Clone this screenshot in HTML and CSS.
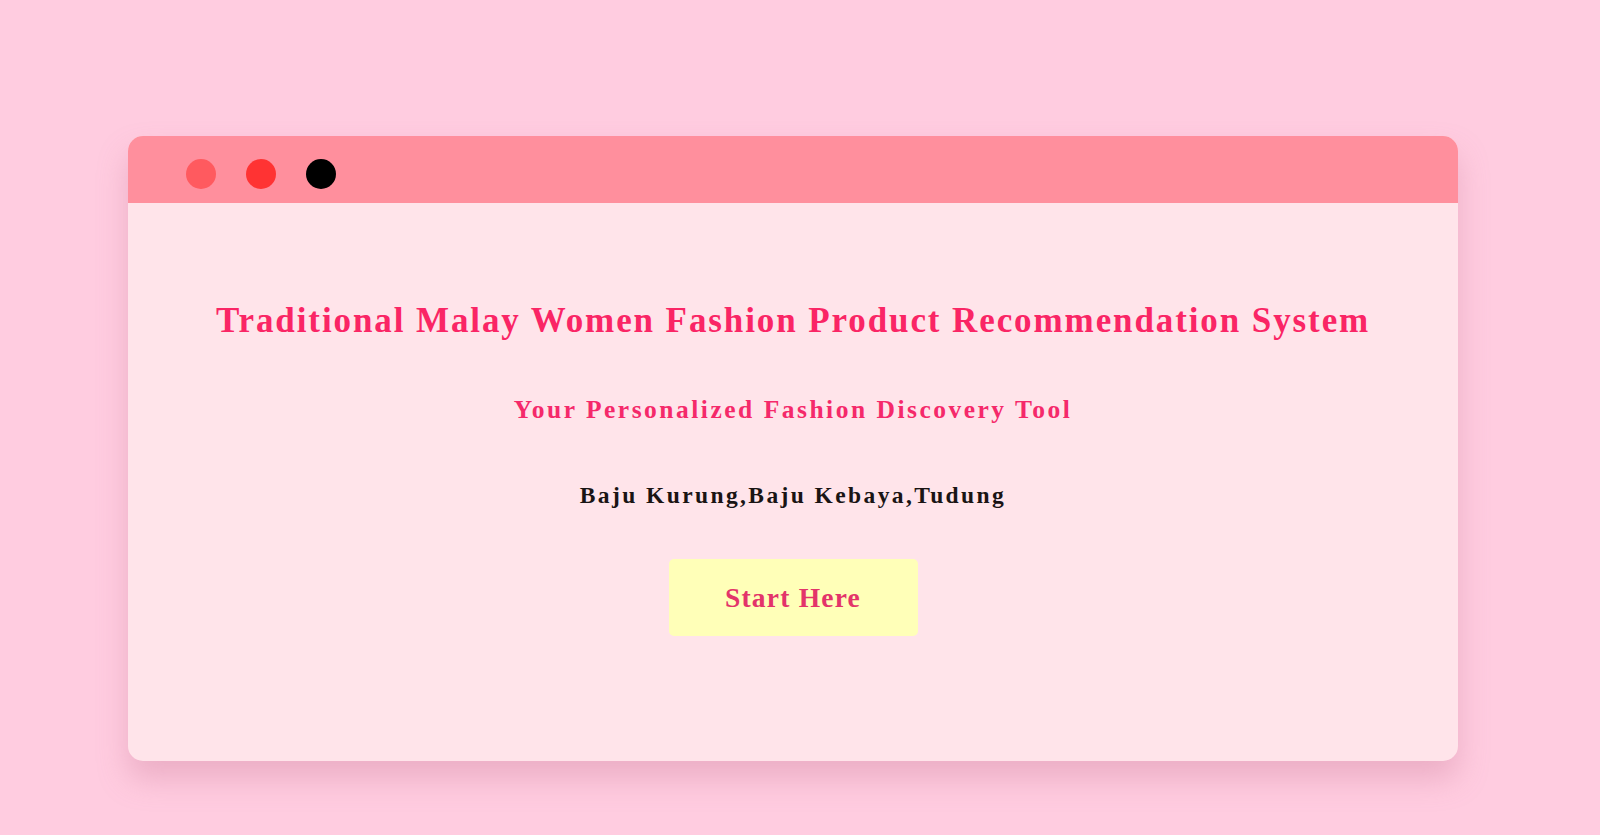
FILE: index.html
```html
<!DOCTYPE html>
<html lang="en">
<head>
<meta charset="utf-8">
<title>Traditional Malay Women Fashion Product Recommendation System</title>
<link rel="stylesheet" href="styles.css">
</head>
<body>
<div class="window">
  <div class="window-bar">
    <span class="dot dot-1"></span>
    <span class="dot dot-2"></span>
    <span class="dot dot-3"></span>
  </div>
  <div class="window-body">
    <h1 class="title">Traditional Malay Women Fashion Product Recommendation System</h1>
    <h2 class="subtitle">Your Personalized Fashion Discovery Tool</h2>
    <p class="categories">Baju Kurung,Baju Kebaya,Tudung</p>
    <button class="start-btn" type="button">Start Here</button>
  </div>
</div>
</body>
</html>
```
FILE: styles.css
```css
html, body {
  margin: 0;
  padding: 0;
}
body {
  background: #ffcce0;
  font-family: "Liberation Serif", "DejaVu Serif", serif;
  min-height: 835px;
  overflow: hidden;
}
.window {
  width: 1330px;
  margin: 136px 0 0 128px;
  background: #ffe4ea;
  border-radius: 15px;
  box-shadow: 0 18px 30px rgba(200, 120, 150, 0.35);
}
.window-bar {
  height: 67px;
  background: #ff8f9d;
  border-radius: 15px 15px 0 0;
  display: flex;
  align-items: flex-start;
  padding: 23px 0 0 58px;
  box-sizing: border-box;
  gap: 30px;
}
.dot {
  width: 30px;
  height: 30px;
  border-radius: 50%;
  display: block;
}
.dot-1 { background: #ff5a5f; }
.dot-2 { background: #ff3333; }
.dot-3 { background: #000000; }
.window-body {
  display: flex;
  flex-direction: column;
  align-items: center;
  padding: 98px 0 125px;
}
.title {
  margin: 0;
  font-size: 35px;
  line-height: 40px;
  font-weight: bold;
  letter-spacing: 1.9px;
  color: #fa2565;
}
.subtitle {
  margin: 54px 0 0;
  font-size: 25.5px;
  line-height: 30px;
  font-weight: bold;
  letter-spacing: 2.5px;
  color: #f5296a;
}
.categories {
  margin: 56px 0 0;
  font-size: 23.5px;
  line-height: 28px;
  font-weight: bold;
  letter-spacing: 2.4px;
  color: #1a1414;
}
.start-btn {
  margin-top: 50px;
  width: 249px;
  height: 77px;
  border: none;
  border-radius: 5px;
  background: #ffffb8;
  color: #e3346a;
  font-family: inherit;
  font-size: 27.5px;
  font-weight: bold;
  letter-spacing: 1.2px;
  cursor: pointer;
}
```
